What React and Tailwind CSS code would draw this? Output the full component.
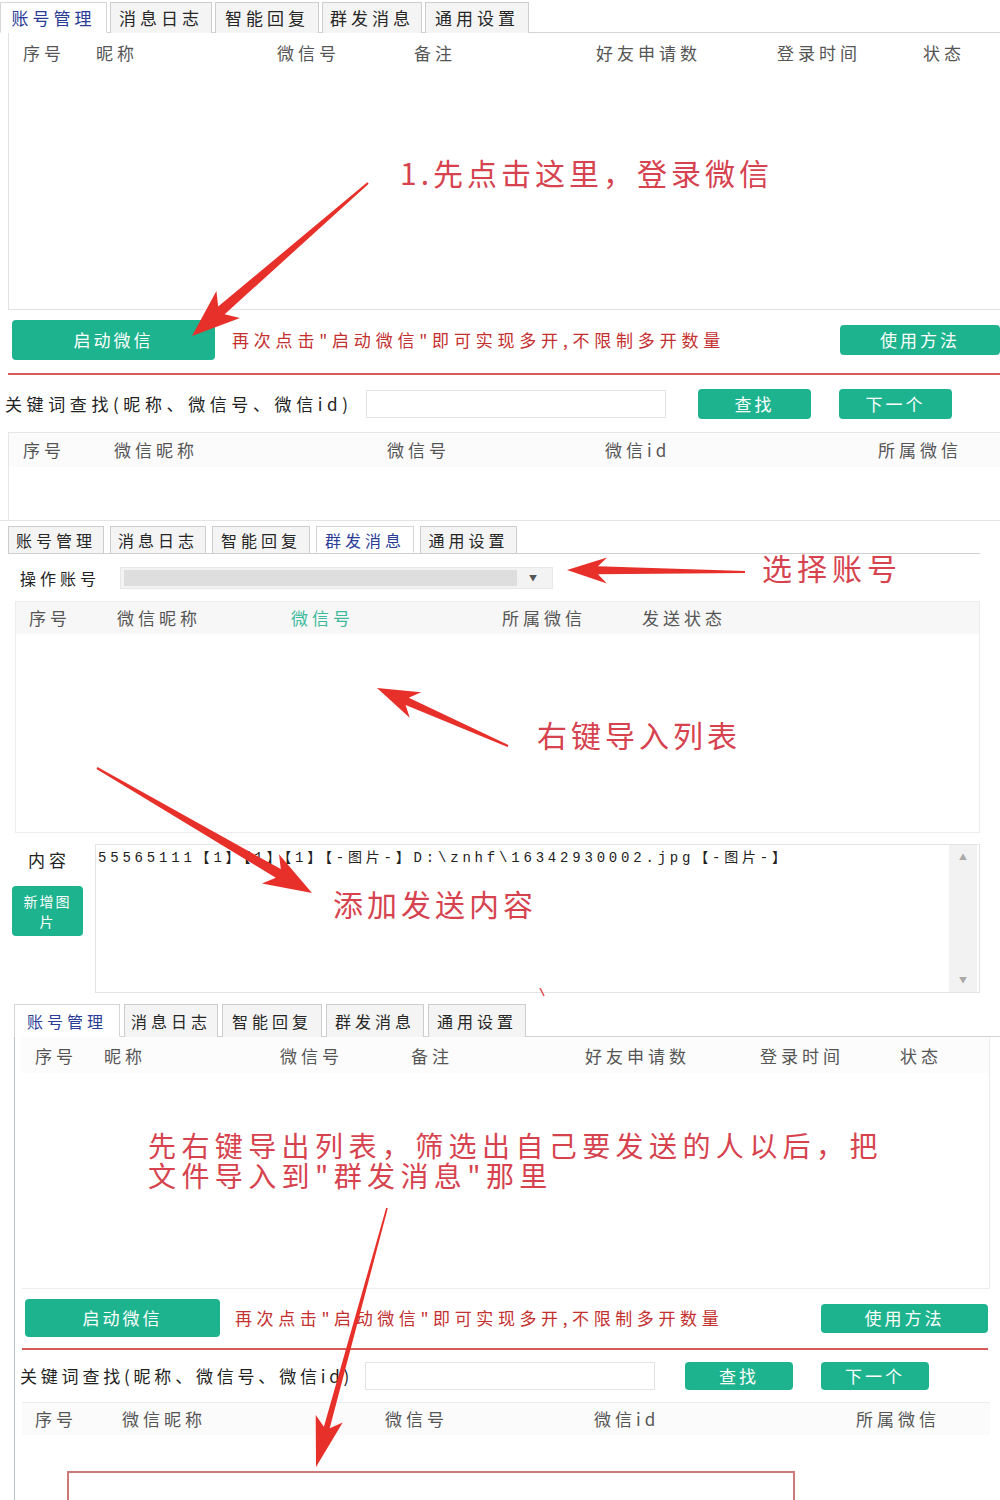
import React from 'react'

const TAB_NAMES = ['账号管理', '消息日志', '智能回复', '群发消息', '通用设置']

// tapered arrow like a screenshot annotation tool draws
function arrowPoints(x1, y1, x2, y2, { tail = 1, neck = 4, head = 15, headLen = 42, notch = 9 } = {}) {
  const dx = x2 - x1
  const dy = y2 - y1
  const len = Math.hypot(dx, dy)
  const ux = dx / len
  const uy = dy / len
  const px = -uy
  const py = ux
  const at = (back, w) => [x2 - ux * back + px * w, y2 - uy * back + py * w]
  return [
    [x1 + px * tail, y1 + py * tail],
    at(headLen - notch, neck),
    at(headLen, head),
    [x2, y2],
    at(headLen, -head),
    at(headLen - notch, -neck),
    [x1 - px * tail, y1 - py * tail],
  ]
    .map(([x, y]) => `${x.toFixed(1)},${y.toFixed(1)}`)
    .join(' ')
}

const ARROWS = [
  { from: [368, 183], to: [192, 336], opts: { neck: 5, head: 18, headLen: 48 } },
  { from: [745, 572], to: [567, 570], opts: { neck: 4, head: 13, headLen: 40 } },
  { from: [508, 746], to: [377, 688], opts: { neck: 4, head: 14, headLen: 42 } },
  { from: [97, 768], to: [312, 893], opts: { neck: 5, head: 17, headLen: 48 } },
  { from: [387, 1208], to: [316, 1467], opts: { tail: 0.8, neck: 3, head: 14, headLen: 50 } },
]

function Tabs({ active, widths, gap, height, text = 'text-[17px]' }) {
  return (
    <div className={`flex items-end ${gap}`}>
      {TAB_NAMES.map((name, i) => (
        <div
          key={name}
          className={`${widths[i]} ${height} ${text} flex shrink-0 items-center justify-center tracking-[4px] -mb-px ${
            i === active
              ? 'border border-b-white border-[#d6d6d6] bg-white text-[#2a3c96]'
              : 'border border-b-0 border-[#cdcdcd] bg-[#f4f4f4] text-[#262626]'
          }`}
        >
          {name}
        </div>
      ))}
    </div>
  )
}

function HeaderRow({ cols, pad, height, className = '' }) {
  return (
    <div className={`flex items-center ${pad} ${height} ${className}`}>
      {cols.map(([label, w, color]) => (
        <div key={label} className={`${w} shrink-0 text-[17px] tracking-[4px] ${color || 'text-[#555]'}`}>
          {label}
        </div>
      ))}
    </div>
  )
}

function GreenButton({ className, children }) {
  return (
    <div className={`flex shrink-0 items-center justify-center rounded-[4px] bg-[#1db38e] text-[17px] tracking-[3px] text-white ${className}`}>
      {children}
    </div>
  )
}

function SearchRow({ labelW, labelTrack, inputW, findGap, findW, nextGap, height }) {
  return (
    <div className={`flex items-center ${height}`}>
      <div className={`${labelW} ${labelTrack} shrink-0 whitespace-nowrap text-[17px] text-[#222]`}>关键词查找(昵称、微信号、微信id)</div>
      <div className={`${inputW} h-[28px] shrink-0 border border-[#e4e4e4] bg-white`} />
      <GreenButton className={`${findGap} ${findW} h-full`}>查找</GreenButton>
      <GreenButton className={`${nextGap} ${findW} h-full`}>下一个</GreenButton>
    </div>
  )
}

export default function App() {
  return (
    <div className="relative h-[1500px] w-[1000px] overflow-hidden bg-white font-['Noto_Sans_CJK_SC','Liberation_Sans',sans-serif] text-[#333]">
      {/* panel 1: account manager */}
      <section className="flex h-[520px] flex-col">
        <div className="h-[33px] border-b border-[#d4d4d4] pt-[2px]">
          <Tabs
            active={0}
            gap="gap-[3px]"
            height="h-[31px]"
            widths={['w-[107px]', 'w-[102px]', 'w-[104px]', 'w-[100px]', 'w-[104px]']}
          />
        </div>
        <div className="ml-[8px] h-[277px] border-b border-l border-[#e2e2e2]">
          <HeaderRow
            pad="pl-[14px] pt-[3px]"
            height="h-[36px]"
            cols={[
              ['序号', 'w-[73px]'],
              ['昵称', 'w-[181px]'],
              ['微信号', 'w-[137px]'],
              ['备注', 'w-[182px]'],
              ['好友申请数', 'w-[181px]'],
              ['登录时间', 'w-[146px]'],
              ['状态', 'w-[60px]'],
            ]}
          />
        </div>
        <div className="mt-[10px] flex h-[40px] items-center pl-[12px]">
          <GreenButton className="h-[40px] w-[203px]">启动微信</GreenButton>
          <div className="ml-[17px] text-[17px] tracking-[4.8px] text-[#c4302f]">再次点击"启动微信"即可实现多开,不限制多开数量</div>
          <GreenButton className="ml-auto h-[30px] w-[160px]">使用方法</GreenButton>
        </div>
        <div className="ml-[8px] mt-[13px] border-t-2 border-[#d65a5a]" />
        <div className="mt-[14px] pl-[5px]">
          <SearchRow labelW="w-[361px]" labelTrack="tracking-[4.6px]" inputW="w-[300px]" findGap="ml-[32px]" findW="w-[113px]" nextGap="ml-[28px]" height="h-[30px]" />
        </div>
        <div className="ml-[8px] mt-[13px] flex-1 border-l border-t border-[#e6e6e6]">
          <HeaderRow
            pad="pl-[14px]"
            height="h-[34px]"
            className="bg-[#fbfbfb]"
            cols={[
              ['序号', 'w-[91px]'],
              ['微信昵称', 'w-[273px]'],
              ['微信号', 'w-[218px]'],
              ['微信id', 'w-[273px]'],
              ['所属微信', 'w-[100px]'],
            ]}
          />
        </div>
      </section>

      {/* panel 2: mass message */}
      <section className="flex h-[480px] flex-col border-t border-[#e4e4e4]">
        <div className="ml-[8px] mr-[20px] mt-[5px] h-[28px] border-b border-[#cfcfcf]">
          <Tabs
            active={3}
            gap="gap-[6px]"
            height="h-[27px]"
            text="text-[16px]"
            widths={['w-[96px]', 'w-[96px]', 'w-[98px]', 'w-[98px]', 'w-[97px]']}
          />
        </div>
        <div className="mt-[13px] flex h-[22px] items-center pl-[20px]">
          <div className="w-[100px] shrink-0 text-[16px] tracking-[4px] text-[#222]">操作账号</div>
          <div className="flex h-[22px] w-[433px] items-center border border-[#e8e8e8] bg-[#f3f3f3] px-[3px]">
            <div className="h-[16px] flex-1 bg-[#dedede]" />
            <div className="flex w-[32px] items-center justify-center text-[8px] text-[#555]">▼</div>
          </div>
        </div>
        <div className="ml-[15px] mr-[20px] mt-[12px] h-[232px] border border-[#ececec]">
          <HeaderRow
            pad="pl-[13px]"
            height="h-[32px]"
            className="bg-[#f7f7f7]"
            cols={[
              ['序号', 'w-[88px]'],
              ['微信昵称', 'w-[174px]'],
              ['微信号', 'w-[211px]', 'text-[#3fb99b]'],
              ['所属微信', 'w-[140px]'],
              ['发送状态', 'w-[120px]'],
            ]}
          />
        </div>
        <div className="mt-[11px] flex">
          <div className="flex w-[95px] shrink-0 flex-col">
            <div className="mt-[3px] pl-[28px] text-[17px] tracking-[4px] text-[#222]">内容</div>
            <div className="ml-[12px] mt-[13px] flex h-[50px] w-[71px] flex-col items-center justify-center rounded-[4px] bg-[#1db38e] text-center text-[14px] leading-[20px] tracking-[2px] text-white">
              <span>新增图</span>
              <span>片</span>
            </div>
          </div>
          <div className="flex h-[149px] w-[885px] border border-[#e4e4e4]">
            <div className="flex-1 pl-[2px] pt-[3px] font-['Liberation_Mono','Noto_Sans_CJK_SC',monospace] text-[14px] tracking-[3.8px] text-[#222]">
              55565111【1】【1】【1】【-图片-】D:\znhf\16342930002.jpg【-图片-】
            </div>
            <div className="mr-[2px] flex w-[28px] flex-col items-center justify-between bg-[#f2f2f2] py-[6px] text-[8px] text-[#aaa]">
              <span>▲</span>
              <span>▼</span>
            </div>
          </div>
        </div>
      </section>

      {/* panel 3: account manager again */}
      <section className="flex h-[500px] flex-col pt-[4px]">
        <div className="ml-[14px] h-[34px] border-b border-[#d4d4d4]">
          <Tabs
            active={0}
            gap="gap-[4px]"
            height="h-[33px]"
            text="text-[16px]"
            widths={['w-[106px]', 'w-[94px]', 'w-[100px]', 'w-[98px]', 'w-[98px]']}
          />
        </div>
        <div className="ml-[14px] flex flex-1 flex-col border-l border-[#b8c2cc] pl-[7px] pr-[10px]">
          <div className="h-[252px] border-b border-r border-[#ececec]">
            <HeaderRow
              pad="pl-[13px] pt-[2px]"
              height="h-[36px]"
              className="bg-[#fcfcfc]"
              cols={[
                ['序号', 'w-[69px]'],
                ['昵称', 'w-[176px]'],
                ['微信号', 'w-[131px]'],
                ['备注', 'w-[174px]'],
                ['好友申请数', 'w-[175px]'],
                ['登录时间', 'w-[140px]'],
                ['状态', 'w-[60px]'],
              ]}
            />
          </div>
          <div className="mt-[10px] flex h-[38px] items-center pl-[3px]">
            <GreenButton className="h-[38px] w-[195px]">启动微信</GreenButton>
            <div className="ml-[15px] text-[17px] tracking-[4.6px] text-[#c4302f]">再次点击"启动微信"即可实现多开,不限制多开数量</div>
            <GreenButton className="ml-auto mr-[2px] h-[29px] w-[167px]">使用方法</GreenButton>
          </div>
          <div className="mr-[2px] mt-[11px] border-t-2 border-[#d65a5a]" />
          <div className="mt-[12px] -ml-[2px]">
            <SearchRow labelW="w-[345px]" labelTrack="tracking-[3.8px]" inputW="w-[290px]" findGap="ml-[30px]" findW="w-[108px]" nextGap="ml-[28px]" height="h-[28px]" />
          </div>
          <div className="mt-[12px] flex-1 border-t border-[#ececec]">
            <HeaderRow
              pad="pl-[13px]"
              height="h-[32px]"
              className="bg-[#fbfbfb]"
              cols={[
                ['序号', 'w-[87px]'],
                ['微信昵称', 'w-[263px]'],
                ['微信号', 'w-[209px]'],
                ['微信id', 'w-[262px]'],
                ['所属微信', 'w-[100px]'],
              ]}
            />
            <div className="ml-[45px] mt-[36px] h-[60px] w-[728px] border-2 border-[#cf7a7a]" />
          </div>
        </div>
      </section>

      {/* annotations drawn over the screenshots */}
      <div className="pointer-events-none absolute left-[400px] top-[155px] text-[30px] leading-[34px] tracking-[4px] text-[#d6434f]">1.先点击这里，登录微信</div>
      <div className="pointer-events-none absolute left-[762px] top-[550px] text-[30px] leading-[34px] tracking-[5px] text-[#d6434f]">选择账号</div>
      <div className="pointer-events-none absolute left-[537px] top-[717px] text-[30px] leading-[34px] tracking-[4px] text-[#d6434f]">右键导入列表</div>
      <div className="pointer-events-none absolute left-[333px] top-[886px] text-[30px] leading-[34px] tracking-[4px] text-[#d6434f]">添加发送内容</div>
      <div className="pointer-events-none absolute left-[148px] top-[1130px] flex flex-col text-[28px] tracking-[5.4px] text-[#d6434f]">
        <div className="h-[30px] leading-[30px]">先右键导出列表，筛选出自己要发送的人以后，把</div>
        <div className="h-[30px] leading-[30px]">文件导入到"群发消息"那里</div>
      </div>

      <svg className="pointer-events-none absolute left-0 top-0" width="1000" height="1500" viewBox="0 0 1000 1500">
        {ARROWS.map((a, i) => (
          <polygon key={i} points={arrowPoints(a.from[0], a.from[1], a.to[0], a.to[1], a.opts)} fill="#e8302b" />
        ))}
        <line x1="540" y1="988" x2="544" y2="996" stroke="#e05050" strokeWidth="1.5" />
      </svg>
    </div>
  )
}
